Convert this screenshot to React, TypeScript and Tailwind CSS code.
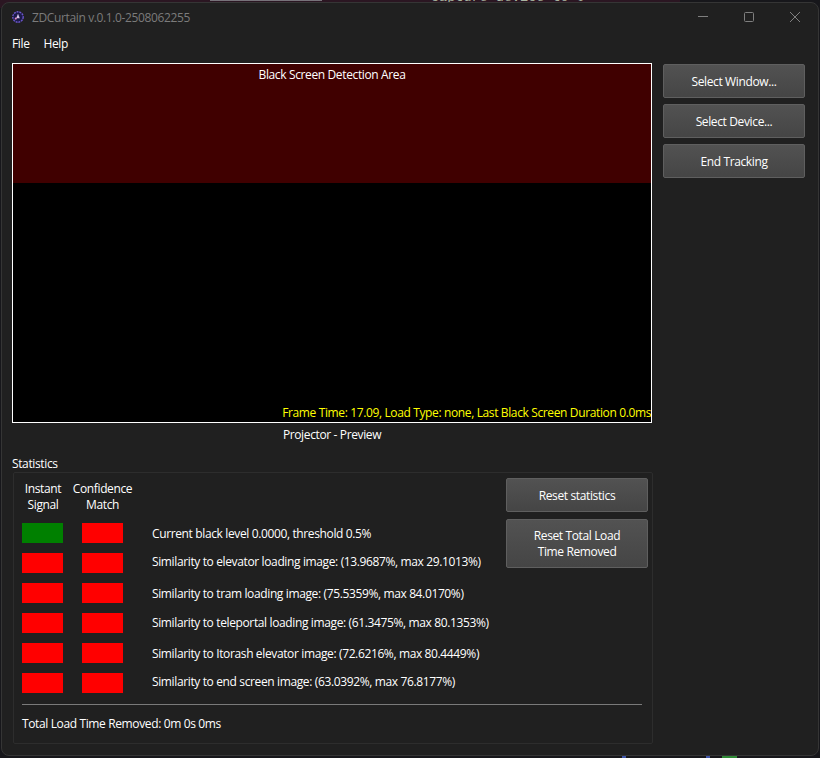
const rows = [
  { label: 'Current black level 0.0000, threshold 0.5%', instant: true, shift: 'translate-y-[1px]' },
  { label: 'Similarity to elevator loading image: (13.9687%, max 29.1013%)', instant: false, shift: '-translate-y-[1px]' },
  { label: 'Similarity to tram loading image: (75.5359%, max 84.0170%)', instant: false, shift: 'translate-y-[1px]' },
  { label: 'Similarity to teleportal loading image: (61.3475%, max 80.1353%)', instant: false, shift: '' },
  { label: 'Similarity to Itorash elevator image: (72.6216%, max 80.4449%)', instant: false, shift: 'translate-y-[1px]' },
  { label: 'Similarity to end screen image: (63.0392%, max 76.8177%)', instant: false, shift: '-translate-y-[1px]' },
];

function AppIcon() {
  return (
    <svg width="14" height="14" viewBox="0 0 14 14" className="shrink-0 -translate-y-[1px]">
      <circle cx="7" cy="7" r="5.2" fill="#1c1a4a" stroke="#6a55c8" strokeWidth="1.4" strokeDasharray="2 0.8" />
      <path d="M7 3.8 L8.8 8.2 L5.2 8.2 Z" fill="#d9c8ee" />
      <circle cx="4.8" cy="8.6" r="1.1" fill="#e88ac0" />
    </svg>
  );
}

function Button({ children, className }: { children: React.ReactNode; className: string }) {
  return (
    <button className={`w-[142px] rounded-[2px] border border-[#5f5f5f] bg-gradient-to-b from-[#525252] to-[#454545] pt-px text-center text-[12px] leading-[16px] text-white ${className}`}>
      {children}
    </button>
  );
}

export default function App() {
  return (
    <div className="relative h-[758px] w-[820px] overflow-hidden bg-[#17171b] pt-[2px] font-['Open_Sans',sans-serif] text-[12px] tracking-[-0.37px] text-white">
      {/* Desktop peeking out behind the window */}
      <div className="absolute left-0 top-0 h-[8px] w-[680px] bg-[#2b1622]" />
      <div className="absolute left-[431px] top-[-10px] whitespace-nowrap font-['Liberation_Mono',monospace] text-[13.5px] leading-[16px] tracking-normal text-[#a9b5a0]">
        capture device to 0
      </div>
      <div className="absolute left-[210px] top-0 h-px w-[112px] bg-[#77727a]" />
      <div className="absolute bottom-0 left-[622px] h-[2px] w-[4px] bg-[#3f55a8]" />
      <div className="absolute bottom-0 left-[706px] h-[2px] w-[4px] bg-[#3f55a8]" />
      <div className="absolute bottom-0 left-[722px] h-[2px] w-[15px] bg-[#2f8a36]" />

      <div className="relative mx-px h-[754px] rounded-lg border border-[#353535] bg-[#202020]">
        {/* Title bar */}
        <div className="flex h-[29px] items-center pl-[9px]">
          <AppIcon />
          <span className="ml-[7px] text-[#7b7b7b]">ZDCurtain v.0.1.0-2508062255</span>
          <div className="ml-auto flex -translate-y-[1px] items-center">
            <svg width="12" height="12" viewBox="0 0 12 12" className="mr-[34px]">
              <path d="M1 5.5H11" stroke="#7f7f7f" />
            </svg>
            <svg width="12" height="12" viewBox="0 0 12 12" className="mr-[34px]">
              <rect x="1.5" y="1.5" width="9" height="9" rx="1" fill="none" stroke="#7f7f7f" />
            </svg>
            <svg width="12" height="12" viewBox="0 0 12 12" className="mr-[17px]">
              <path d="M1 1L11 11M11 1L1 11" stroke="#7f7f7f" />
            </svg>
          </div>
        </div>

        {/* Menu */}
        <div className="flex h-[24px] items-center gap-[14px] pl-[10px]">
          <span>File</span>
          <span>Help</span>
        </div>

        {/* Preview + side buttons */}
        <div className="mt-[7px] flex pl-[10px]">
          <div className="w-[640px]">
            <div className="relative h-[360px] border border-white bg-black">
              <div className="h-[119px] bg-[#400000] pt-[3px] text-center leading-[16px]">Black Screen Detection Area</div>
              <div className="absolute bottom-0 right-0 whitespace-nowrap leading-[18px] text-[#ffff00]">
                Frame Time: 17.09, Load Type: none, Last Black Screen Duration 0.0ms
              </div>
            </div>
            <div className="mt-[4px] text-center leading-[16px]">Projector - Preview</div>
          </div>
          <div className="ml-[11px] flex flex-col gap-[6px] pt-px">
            <Button className="h-[34px]">Select Window...</Button>
            <Button className="h-[34px]">Select Device...</Button>
            <Button className="h-[34px]">End Tracking</Button>
          </div>
        </div>

        {/* Statistics */}
        <div className="mt-[13px] pl-[10px] leading-[16px]">Statistics</div>
        <div className="ml-[11px] h-[272px] w-[640px] rounded-[2px] border border-[#2d2d2d] px-[8px]">
          <div className="flex">
            <div className="flex-1">
              <div className="flex pt-[8px] text-center leading-[16px]">
                <div className="w-[42px]">Instant<br />Signal</div>
                <div className="ml-[8px] w-[61px] whitespace-nowrap">Confidence<br />Match</div>
              </div>
              <div className="mt-[10px] flex flex-col gap-[10px]">
                {rows.map((row) => (
                  <div key={row.label} className="flex h-[20px] items-center">
                    <div className={`h-[20px] w-[41px] ${row.instant ? 'bg-[#008000]' : 'bg-[#ff0000]'}`} />
                    <div className="ml-[19px] h-[20px] w-[41px] bg-[#ff0000]" />
                    <div className={`ml-[29px] whitespace-nowrap ${row.shift}`}>{row.label}</div>
                  </div>
                ))}
              </div>
            </div>
            <div className="mr-[-4px] flex flex-col gap-[7px] pt-[5px]">
              <Button className="h-[34px]">Reset statistics</Button>
              <Button className="h-[49px]">Reset Total Load<br />Time Removed</Button>
            </div>
          </div>
          <div className="mt-[11px] mr-[2px] h-px bg-[#7a7a7a]" />
          <div className="mt-[11px] leading-[16px]">Total Load Time Removed: 0m 0s 0ms</div>
        </div>
      </div>
    </div>
  );
}
